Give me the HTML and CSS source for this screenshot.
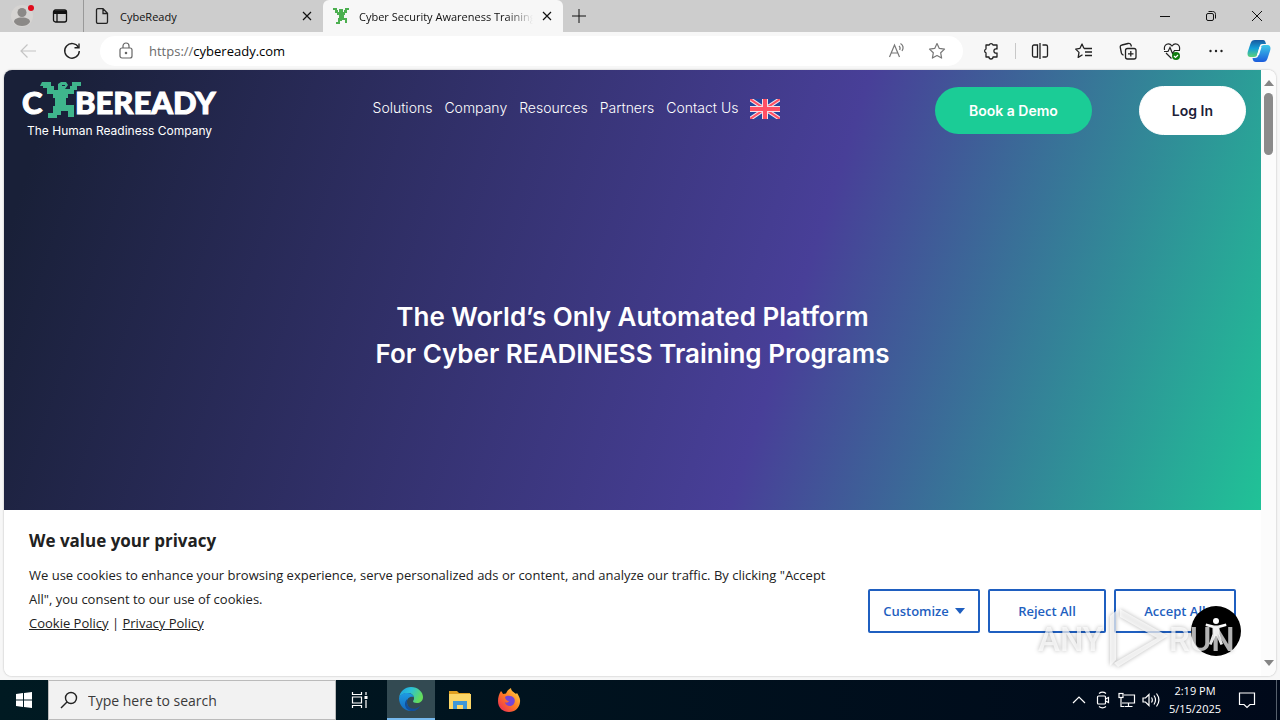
FILE: index.html
```
<!DOCTYPE html>
<html lang="en">
<head>
    <meta charset="UTF-8">
    <meta name="viewport" content="width=device-width, initial-scale=1.0">
    <title>Cyber Security Awareness Training</title>
    <link rel="stylesheet" href="styles.css">
</head>
<body>
<div class="tabbar">
    <button class="profile" aria-label="Profile">
        <svg width="24" height="24" viewBox="0 0 24 24"><circle cx="12" cy="12" r="11" fill="#d6d4d2"/><circle cx="12" cy="8.500" r="4.500" fill="#8b8987"/><path d="M4 18c0-3 3-4.500 8-4.500s8 1.500 8 4.500c-2 3-5 4-8 4s-6-1-8-4z" fill="#8b8987"/><circle cx="21" cy="4" r="3" fill="#e00b1c"/></svg>
    </button>
    <button class="tab-menu" aria-label="Tab actions">
        <svg width="16" height="16" viewBox="0 0 16 16" fill="none" stroke="#111" stroke-width="1.300"><rect x="1.500" y="2" width="13" height="12" rx="2"/><path d="M2 3.500h12M2 5h12" stroke-width="2"/><path d="M5 5v9"/></svg>
    </button>
    <div class="tab">
        <svg width="16" height="18" viewBox="0 0 16 18" fill="none" stroke="#222" stroke-width="1.300"><path d="M2.500 3c0-.8.600-1.300 1.300-1.300H9l4.500 4.600V15c0 .8-.6 1.300-1.300 1.300H3.800c-.7 0-1.300-.5-1.300-1.300zM9 2v4.500h4.300"/></svg>
        <span class="tab-title">CybeReady</span>
        <button class="tab-close" aria-label="Close tab"><svg width="10" height="10" viewBox="0 0 10 10" stroke="#111" stroke-width="1.200"><path d="M1 1l8 8M9 1L1 9"/></svg></button>
    </div>
    <div class="tab tab-active">
        <svg width="16" height="16" viewBox="0 0 16 16" fill="#4caf50"><path d="M0 0h4v2h1v2h1V1h4v3h1V2h1V0h4v2h-2v3h-2v2h-1v3h3v5h-2v-3H9v1H7v3H3v-2h2v-4h1V7H4V5H2V2H0z"/></svg>
        <span class="tab-title tab-fade">Cyber Security Awareness Training</span>
        <button class="tab-close" aria-label="Close tab"><svg width="10" height="10" viewBox="0 0 10 10" stroke="#111" stroke-width="1.200"><path d="M1 1l8 8M9 1L1 9"/></svg></button>
    </div>
    <button class="new-tab" aria-label="New tab"><svg width="14" height="14" viewBox="0 0 14 14" stroke="#111"><path d="M0 7h14M7 0v14"/></svg></button>
    <div class="window-controls">
        <button aria-label="Minimize"><svg width="10" height="10" viewBox="0 0 10 10" stroke="#111"><path d="M0 5.500h10"/></svg></button>
        <button aria-label="Restore"><svg width="12" height="12" viewBox="0 0 12 12" fill="none" stroke="#111"><rect x="1.500" y="3.500" width="7" height="7" rx="1.500"/><path d="M3.500 1.500h4c2 0 3 1 3 3v4"/></svg></button>
        <button aria-label="Close"><svg width="12" height="12" viewBox="0 0 12 12" stroke="#111"><path d="M1 1l10 10M11 1L1 11"/></svg></button>
    </div>
</div>

<div class="toolbar">
    <button class="tool" aria-label="Back"><svg width="18" height="16" viewBox="0 0 18 16" fill="none" stroke="#c4c4c4" stroke-width="1.200"><path d="M17 8H2M8.500 1.500L2 8l6.500 6.500"/></svg></button>
    <button class="tool" aria-label="Refresh"><svg width="18" height="18" viewBox="0 0 18 18" fill="none" stroke="#222" stroke-width="1.400"><path d="M15.500 5.500A7.300 7.300 0 1 0 16.300 9"/><path d="M16 1.500v4.300h-4.500"/></svg></button>
    <div class="address">
        <svg width="14" height="18" viewBox="0 0 14 18" fill="none" stroke="#666" stroke-width="1.200"><rect x="1" y="6" width="12" height="10" rx="2"/><path d="M4 6V4a3 3 0 0 1 6 0v2"/><circle cx="7" cy="11" r=".7" fill="#666"/></svg>
        <label class="scheme" for="url">https://</label>
        <input id="url" type="text" value="cybeready.com">
        <button aria-label="Read aloud"><svg width="18" height="18" viewBox="0 0 18 18" fill="none" stroke="#777" stroke-width="1.200"><path d="M1.500 15L6.500 3l5 12M3.300 11h6.400"/><path d="M11 4c1.300 1 1.300 2.500.7 4M12.500 1.500c3 2 3 5 1.500 7.500"/></svg></button>
        <button aria-label="Add to favorites"><svg width="18" height="18" viewBox="0 0 18 18" fill="none" stroke="#777" stroke-width="1.200" stroke-linejoin="round"><path d="M9 1.500l2.300 4.900 5.200.7-3.800 3.700.9 5.300L9 13.500l-4.600 2.600.9-5.300L1.500 7.100l5.200-.7z"/></svg></button>
    </div>
    <button class="tool" aria-label="Extensions"><svg width="18" height="18" viewBox="0 0 18 18" fill="none" stroke="#222" stroke-width="1.300" stroke-linejoin="round"><path d="M4 3h3.200a2 2 0 0 1 3.800 0H15v4a2.200 2.200 0 1 0 0 4v4h-4a2 2 0 0 1-4 0H4v-4.200a2 2 0 0 1 0-3.800z"/></svg></button>
    <div class="divider"></div>
    <button class="tool" aria-label="Split screen"><svg width="18" height="18" viewBox="0 0 18 18" fill="none" stroke="#222" stroke-width="1.300"><path d="M6.500 3H3c-.8 0-1.500.6-1.500 1.500v9c0 .8.600 1.500 1.500 1.500h3.500zM11.500 3H15c.8 0 1.500.6 1.500 1.500v9c0 .8-.6 1.500-1.500 1.500h-3.500M9 1v16"/></svg></button>
    <button class="tool" aria-label="Favorites"><svg width="18" height="18" viewBox="0 0 18 18" fill="none" stroke="#222" stroke-width="1.300" stroke-linejoin="round"><path d="M9 6.500L7 2 5 6.300l-4.300.8L4 10.400l-.8 5 4.300-2.600M9 6.500h8M10 10h7M10 13.500h7"/></svg></button>
    <button class="tool" aria-label="Collections"><svg width="18" height="18" viewBox="0 0 18 18" fill="none" stroke="#222" stroke-width="1.300"><rect x="6.500" y="6.500" width="10.500" height="10.500" rx="2"/><path d="M4.500 13C3 13 2.700 12 2.400 11L1.300 5.500C1 4 1.500 3.300 3 3l6-1.500c1.500-.3 2.500 0 3 1.500l.4 1.500M11.800 9v5.500M9 11.800h5.500"/></svg></button>
    <button class="tool" aria-label="Browser essentials"><svg width="18" height="18" viewBox="0 0 18 18" fill="none" stroke="#222" stroke-width="1.200"><path d="M1.500 8C.5 2 6 0 9 4c3-4 8.500-2 7.500 4M3 11l5.500 5.500"/><path d="M1 9.500h4l2-4 2.500 6 2-3H17"/><circle cx="13" cy="14" r="4" fill="#107c10" stroke="none"/><path d="M11 14l1.500 1.500L15 13" stroke="#fff"/></svg></button>
    <button class="tool" aria-label="Settings and more"><svg width="16" height="4" viewBox="0 0 16 4" fill="#222"><circle cx="2.500" cy="2" r="1.200"/><circle cx="8" cy="2" r="1.200"/><circle cx="13.500" cy="2" r="1.200"/></svg></button>
    <button class="tool" aria-label="Copilot">
        <svg width="24" height="24" viewBox="0 0 24 24">
            <defs>
                <linearGradient id="cp1" x1="0" y1="0" x2="0" y2="1"><stop offset="0" stop-color="#17599f"/><stop offset=".5" stop-color="#149fd8"/><stop offset="1" stop-color="#5cd17a"/></linearGradient>
                <linearGradient id="cp2" x1="0" y1="0" x2="0" y2="1"><stop offset="0" stop-color="#3cc9e8"/><stop offset="1" stop-color="#1b5cdc"/></linearGradient>
            </defs>
            <path d="M8 1h8c2 0 2.500 2 3 4h-4c-1.500 0-2 1-2.500 3l-2 7c-.6 2-1.500 3-3.500 3H3.500C1 18 0 16 .7 13L3.500 4.500C4.300 2 5.500 1 8 1z" fill="url(#cp1)"/>
            <path d="M16 23H9c-2 0-3-1-3.500-4H8c2 0 3-1 3.600-3l2-7c.6-2 1.400-3 3.400-3h3.500c2.500 0 3.500 2 2.800 5l-2.800 8.500c-.8 2.500-2 3.500-4.500 3.500z" fill="url(#cp2)"/>
            <path d="M12.500 8h2l-2.500 8h-2z" fill="#fff"/>
        </svg>
    </button>
</div>

<div class="window">
    <div class="page">
        <div class="hero">
            <div class="header">
                <a class="logo" href="#" aria-label="CybeReady">
                    <svg width="196" height="60" viewBox="0 0 196 60">
                        <g class="wordmark"><text x="0" y="34">C</text><text x="53" y="34">BEREADY</text></g>
                        <path fill="#3fb58c" d="M20 2h9v4h3v4h4V4l3-2h5l2 3-3 4h5V6h2V2h9v4h-4v4h-3v4h-6v4h-2v7h8v12h-6v-6h-7v4h-4v3h-9v-5h5v-7h2v-8h-2v-4h-6V8h-4V6h-3z"/>
                        <path fill="#1c2140" d="M40 5h3v1h-3z"/>
                        <text class="tagline" x="5" y="55">The Human Readiness Company</text>
                    </svg>
                </a>
                <div class="nav">
                    <a href="#">Solutions</a>
                    <a href="#">Company</a>
                    <a href="#">Resources</a>
                    <a href="#">Partners</a>
                    <a href="#">Contact Us</a>
                    <a href="#" aria-label="English"><svg width="30" height="20" viewBox="0 0 30 20"><path fill="#24479d" d="M0 0h30v20H0z"/><path d="M0 0l30 20M30 0L0 20" stroke="#f3dfe8" stroke-width="4"/><path d="M0 0l30 20M30 0L0 20" stroke="#ff5064" stroke-width="2"/><path d="M15 0v20M0 10h30" stroke="#f3dfe8" stroke-width="6"/><path d="M15 0v20M0 10h30" stroke="#ff5064" stroke-width="4"/></svg></a>
                </div>
                <div class="actions">
                    <a class="pill demo" href="#">Book a Demo</a>
                    <a class="pill login" href="#">Log In</a>
                </div>
            </div>
            <h1>The World’s Only Automated Platform<br>For Cyber READINESS Training Programs</h1>
        </div>
        <div class="cookies">
            <div class="cookies-text">
                <h2>We value your privacy</h2>
                <p>We use cookies to enhance your browsing experience, serve personalized ads or content, and analyze our traffic. By clicking "Accept All", you consent to our use of cookies.</p>
                <p><a href="#">Cookie Policy</a> | <a href="#">Privacy Policy</a></p>
            </div>
            <div class="cookies-buttons">
                <button class="customize">Customize <svg width="10" height="6" viewBox="0 0 10 6" fill="#1f5fc0"><path d="M0 0h10L5 6z"/></svg></button>
                <button class="reject">Reject All</button>
                <button class="accept">Accept All</button>
            </div>
        </div>
        <button class="accessibility" aria-label="Accessibility">
            <svg width="50" height="50" viewBox="0 0 50 50"><circle cx="25" cy="25" r="25" fill="#000"/><circle cx="25" cy="15" r="3" fill="#fff"/><path d="M15 17.500l8 2h4l8-2 .5 2.500-7 2v6l3.500 10-2.500 1-4-9h-1l-4 9-2.500-1 3.500-10v-6l-7-2z" fill="#fff"/></svg>
        </button>
    </div>
    <div class="scrollbar">
        <svg width="10" height="6" viewBox="0 0 10 6" fill="#858585"><path d="M5 0l5 6H0z"/></svg>
        <div class="thumb"></div>
        <svg width="10" height="6" viewBox="0 0 10 6" fill="#858585"><path d="M0 0h10L5 6z"/></svg>
    </div>
    <svg class="watermark" width="200" height="66" viewBox="0 0 200 66">
        <text x="2" y="45">ANY</text>
        <path d="M74 10l6-5v49l-6 6zM84 3l48 27-50 31-4-4 43-25-37-21z"/>
        <text x="133" y="45">RUN</text>
    </svg>
</div>

<div class="taskbar">
    <button class="task" aria-label="Start"><svg width="16" height="16" viewBox="0 0 16 16" fill="#fff"><path d="M0 2l7-1v6.500H0zM8 1l8-1v7.500H8zM0 8.500h7V15l-7-1zM8 8.500h8V16l-8-1z"/></svg></button>
    <div class="search">
        <svg width="18" height="18" viewBox="0 0 18 18" fill="none" stroke="#222" stroke-width="1.400"><circle cx="11" cy="7" r="5.500"/><path d="M7 11L1 17"/></svg>
        <input type="text" aria-label="Search" placeholder="Type here to search">
    </div>
    <button class="task" aria-label="Task view"><svg width="18" height="16" viewBox="0 0 18 16" fill="none" stroke="#fff" stroke-width="1.200"><path d="M1.500 0v2.500h9V0M1.500 16v-2.500h9V16M1.500 5h9v6h-9zM15 0v3M15 8v8"/><path d="M13.500 5.500h3" stroke-width="3"/></svg></button>
    <div class="apps">
        <button class="task task-active" aria-label="Microsoft Edge">
            <svg width="26" height="26" viewBox="0 0 26 26">
                <defs>
                    <linearGradient id="e1" x1="0" y1="0" x2="1" y2=".4"><stop offset="0" stop-color="#1b9de2"/><stop offset=".5" stop-color="#2cc1d6"/><stop offset="1" stop-color="#63dc5c"/></linearGradient>
                    <linearGradient id="e2" x1="0" y1="0" x2="0" y2="1"><stop offset="0" stop-color="#1d9be3"/><stop offset="1" stop-color="#1469bd"/></linearGradient>
                </defs>
                <path d="M1 12C2 5 7 1 13 1c7 0 12 5 12 10 0 4-3 6-6 6-3 0-4-1-4-2 1-1 1-2 1-3 0-3-3-5-6-5-4 0-8 2-9 5z" fill="url(#e1)"/>
                <path d="M1 12c1-3 4-5 8-5 4 0 6 2 7 4-5-1-7 2-7 5 0 5 4 9 9 8-2 1-3 1-5 1C6 25 1 19 1 12z" fill="url(#e2)"/>
                <path d="M9.500 13c-2 5 1 9 5 9.500 3 .5 6-.5 8-3-2 4-6 6-9 5.500-4-.5-7-4-6.500-7.500.2-2 1-3.500 2.500-4.500z" fill="#124f9b"/>
            </svg>
        </button>
        <button class="task" aria-label="File Explorer"><svg width="22" height="20" viewBox="0 0 22 20"><path d="M0 1h8l2 2h11v4H0z" fill="#e0a020"/><path d="M0 4h22v15H0z" fill="#fbd667"/><path d="M4 11h14v8h-4v-4H8v4H4z" fill="#3e97d8"/><path d="M8 15h6v4H8z" fill="#fbd667"/></svg></button>
        <button class="task" aria-label="Firefox">
            <svg width="24" height="24" viewBox="0 0 24 24">
                <defs><linearGradient id="ff" x1="1" y1="0" x2="0" y2="1"><stop offset="0" stop-color="#ffe14a"/><stop offset=".5" stop-color="#ff7a22"/><stop offset="1" stop-color="#e8205e"/></linearGradient></defs>
                <path d="M4 3c1 1 1.500 2 2 3l3-.5C10 3 12 1 14 0c0 3 3 4 5 6l1-1c2 3 3.500 6 3 9-.5 6-5 10-11 10S1 20 1 13c0-4 1-7 3-10z" fill="url(#ff)"/>
                <path d="M8 9c2-2 7-1.500 9 1 2 3 0 8-4 8-3 0-5-2-5-4 1 1 3 1 4-1-2 0-4-2-4-4z" fill="#7545d6"/>
            </svg>
        </button>
    </div>
    <div class="tray">
        <button aria-label="Show hidden icons"><svg width="14" height="16" viewBox="0 0 14 16" fill="none" stroke="#fff" stroke-width="1.200"><path d="M1 11l6-6 6 6"/></svg></button>
        <button aria-label="Meet now"><svg width="14" height="18" viewBox="0 0 14 18" fill="none" stroke="#fff" stroke-width="1.200"><path d="M3 2.500c2-1.500 5-1.500 7 0M3 15.500c2 1.500 5 1.500 7 0"/><rect x="1.500" y="5" width="8" height="8" rx="1"/><path d="M9.500 8l3-1.500v5l-3-1.500"/></svg></button>
        <button aria-label="Network"><svg width="18" height="16" viewBox="0 0 18 16" fill="none" stroke="#fff" stroke-width="1.200"><path d="M6 3h10.500v8H4M10.500 11v3M6.500 14.500h8M3 5.500v9h3"/><rect x="1" y="1.500" width="4" height="4"/></svg></button>
        <button aria-label="Volume"><svg width="18" height="16" viewBox="0 0 18 16" fill="none" stroke="#fff" stroke-width="1.200"><path d="M1 6v4h2.500L7 13.500v-11L3.500 6zM9.500 5.500c1 1.500 1 3.500 0 5M12 3.500c2 3 2 6 0 9M14.500 1.500c3 4 3 9 0 13"/></svg></button>
        <div class="clock">2:19 PM<br>5/15/2025</div>
        <button class="notifications" aria-label="Notifications"><svg width="18" height="18" viewBox="0 0 18 18" fill="none" stroke="#fff" stroke-width="1.200"><path d="M1.500 2h15v11.500H12L9 16.500l-3-3H1.500z"/></svg></button>
        <div class="show-desktop"></div>
    </div>
</div>
</body>
</html>
```

FILE: styles.css
```
* {
    box-sizing: border-box;
}
body {
    display: flex;
    flex-direction: column;
    height: 100vh;
    margin: 0;
    overflow: hidden;
    background-color: #f7f7f7;
    font-family: 'Open Sans', sans-serif;
    font-size: 13px;
    color: #212121;
}
button {
    display: flex;
    align-items: center;
    justify-content: center;
    padding: 0;
    border: 0;
    background: none;
    font: inherit;
    color: inherit;
}
svg {
    flex-shrink: 0;
}
input {
    flex: 1;
    min-width: 0;
    padding: 0;
    border: 0;
    background: none;
    font: inherit;
    color: #000;
}

/* Tab strip */
.tabbar {
    display: flex;
    height: 32px;
    background-color: #cdcdcd;
    font-size: 11px;
}
.profile {
    width: 44px;
}
.profile svg {
    overflow: visible;
}
.tab-menu {
    width: 32px;
}
.tab {
    display: flex;
    align-items: center;
    width: 240px;
    padding: 0 8px 0 10px;
    border-left: 1px solid #999;
    color: #111;
}
.tab:nth-child(3) {
    margin-left: 7px;
}
.tab-title {
    flex: 1;
    margin-left: 10px;
    overflow: hidden;
    white-space: nowrap;
}
.tab-fade {
    -webkit-mask-image: linear-gradient(90deg, #000 85%, transparent);
    mask-image: linear-gradient(90deg, #000 85%, transparent);
}
.tab-close {
    width: 16px;
    height: 16px;
    margin-left: 6px;
}
.tab-active {
    border-left: 0;
    border-radius: 6px 6px 0 0;
    background-color: #f7f7f7;
}
.new-tab {
    width: 32px;
}
.window-controls {
    display: flex;
    margin-left: auto;
}
.window-controls button {
    width: 46px;
}

/* Toolbar */
.toolbar {
    display: flex;
    align-items: center;
    height: 38px;
    padding-left: 6px;
}
.tool {
    width: 44px;
    height: 32px;
}
.tool:last-child {
    width: 42px;
}
.address {
    display: flex;
    flex: 1;
    align-items: center;
    height: 30px;
    margin: 0 6px;
    padding: 0 6px 0 19px;
    border-radius: 15px;
    background-color: #fff;
}
.address button {
    width: 40px;
}
.scheme {
    margin-left: 16px;
    color: #6b6b6b;
}
.divider {
    width: 1px;
    height: 16px;
    margin: 0 2px;
    background-color: #c8c8c8;
}

/* Web page */
.window {
    position: relative;
    display: flex;
    flex: 1;
    min-height: 0;
    margin: 0 4px 4px;
    border-radius: 8px;
    background-color: #fff;
    box-shadow: 0 0 2px #aaa;
    overflow: hidden;
}
.page {
    position: relative;
    display: flex;
    flex: 1;
    flex-direction: column;
}
.hero {
    flex: 1;
    background: linear-gradient(108deg, #192038 4%, #483f98 62%, #20c297);
    font-family: Inter, sans-serif;
    color: #fff;
}
.header {
    display: flex;
    align-items: center;
    justify-content: space-between;
    height: 80px;
    padding: 0 15px 0 18px;
}
.logo {
    display: flex;
}
.wordmark {
    fill: #fff;
    stroke: #fff;
    font-family: Lato, sans-serif;
    font-size: 31px;
    font-weight: 900;
}
.tagline {
    fill: #fff;
    font-size: 12px;
    font-weight: 400;
}
.nav {
    display: flex;
    align-items: flex-start;
    gap: 12px;
    padding-bottom: 2px;
    font-size: 14px;
    font-weight: 300;
}
.nav a {
    display: flex;
    color: #fff;
    text-decoration: none;
}
.actions {
    display: flex;
    align-items: center;
    gap: 47px;
}
.pill {
    padding: 0 32px;
    border-radius: 25px;
    font-size: 14px;
    font-weight: 600;
    line-height: 47px;
    text-decoration: none;
}
.demo {
    padding: 0 34px;
    background-color: #1bcc96;
    color: #fff;
}
.login {
    border: 1px solid #fff;
    background-color: #fff;
    color: #1c2038;
}
.hero h1 {
    margin: 148px 0 0;
    font-size: 26px;
    font-weight: 600;
    line-height: 37px;
    text-align: center;
}
.cookies {
    display: flex;
    align-items: center;
    gap: 32px;
    height: 166px;
    padding: 0 25px;
    background-color: #fff;
}
.cookies-text {
    flex: 1;
    padding-bottom: 22px;
}
.cookies h2 {
    margin: 0 0 10px;
    font-size: 17px;
    line-height: 24px;
}
.cookies p {
    margin: 0;
    line-height: 24px;
}
.cookies a {
    color: #212121;
}
.cookies-buttons {
    display: flex;
    gap: 8px;
    padding-top: 36px;
}
.cookies-buttons button {
    height: 44px;
    border: 2px solid #1f5fc0;
    border-radius: 2px;
    font-weight: 600;
    color: #1f5fc0;
}
.customize {
    gap: 6px;
    width: 112px;
}
.reject {
    width: 118px;
}
.accept {
    width: 122px;
}
.accessibility {
    position: absolute;
    right: 20px;
    bottom: 20px;
}
.scrollbar {
    display: flex;
    flex-direction: column;
    align-items: center;
    width: 15px;
    padding: 10px 0;
    background-color: #fcfcfc;
}
.thumb {
    width: 9px;
    height: 62px;
    margin: 7px 0 auto;
    border-radius: 5px;
    background-color: #8b8b8b;
}
.watermark {
    position: absolute;
    right: 40px;
    bottom: 4px;
    fill: rgba(255, 255, 255, 0.7);
    filter: drop-shadow(0 0 2px rgba(0, 0, 0, 0.4));
    font-family: Roboto, sans-serif;
    font-size: 33px;
    font-weight: 500;
    pointer-events: none;
}

/* Taskbar */
.taskbar {
    display: flex;
    height: 40px;
    background: linear-gradient(90deg, #001a22, #00091a);
}
.task {
    width: 48px;
}
.apps {
    display: flex;
    gap: 1px;
    margin-left: 3px;
}
.task-active {
    border-bottom: 2px solid #76b9ed;
    background-color: #334a52;
}
.search {
    display: flex;
    align-items: center;
    gap: 10px;
    width: 288px;
    padding: 0 11px;
    border: 1px solid #bbb;
    background-color: #f2f2f2;
    font-size: 14px;
}
.search input::placeholder {
    color: #3a3a3a;
}
.tray {
    display: flex;
    align-items: center;
    margin-left: auto;
    color: #fff;
}
.tray button {
    width: 24px;
    height: 40px;
}
.clock {
    width: 64px;
    font-size: 11px;
    line-height: 18px;
    text-align: center;
}
.tray .notifications {
    width: 40px;
}
.show-desktop {
    width: 4px;
    height: 40px;
    margin-left: 9px;
    border-left: 1px solid #56606c;
}
```
